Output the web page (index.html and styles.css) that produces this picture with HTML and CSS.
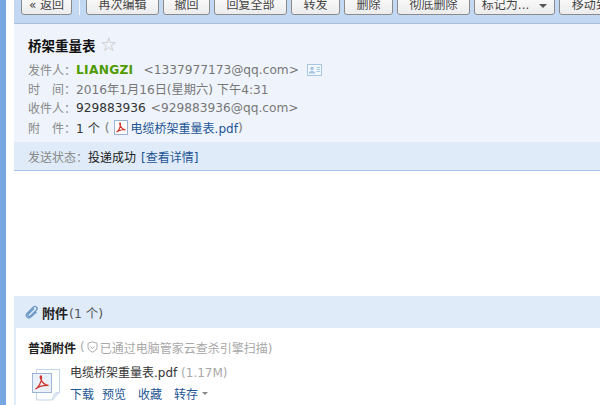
FILE: index.html
```html
<!DOCTYPE html>
<html lang="zh-CN">
<head>
    <meta charset="UTF-8">
    <title>桥架重量表</title>
    <link rel="stylesheet" href="styles.css">
</head>
<body>
    <div class="page">
        <div class="side"></div>
        <div class="main">
            <div class="toolbar">
                <a class="btn btn-back">« 返回</a>
                <span class="sep"></span>
                <a class="btn w73">再次编辑</a>
                <a class="btn w47">撤回</a>
                <a class="btn w73">回复全部</a>
                <a class="btn w49">转发</a>
                <a class="btn w49">删除</a>
                <a class="btn w73">彻底删除</a>
                <a class="btn w81">标记为... <i class="caret"></i></a>
                <a class="btn w73">移动到...</a>
            </div>

            <div class="head">
                <h2 class="subject">桥架重量表 <span class="star">☆</span></h2>
                <div class="row">
                    <span class="lbl">发件人：</span><b class="sender">LIANGZI</b>
                    <span class="addr addr-from">&lt;1337977173@qq.com&gt;</span>
                    <svg class="card" width="15" height="12" viewBox="0 0 15 12">
                        <rect x="0.5" y="0.5" width="14" height="11" fill="#f4f8fd" stroke="#a6c6e6"/>
                        <circle cx="5" cy="4.5" r="1.8" fill="#a6c6e6"/>
                        <path d="M2 9.5h6v-1.5l-2-1h-2l-2 1z" fill="#a6c6e6"/>
                        <path d="M9.5 3.5h3.5M9.5 5.5h3.5M9.5 7.5h3.5" stroke="#a6c6e6"/>
                    </svg>
                </div>
                <div class="row"><span class="lbl">时　间：</span><span class="addr">2016年1月16日(星期六) 下午4:31</span></div>
                <div class="row">
                    <span class="lbl">收件人：</span><span class="val">929883936</span>
                    <span class="addr">&lt;929883936@qq.com&gt;</span>
                </div>
                <div class="row row-att">
                    <span class="lbl">附　件：</span><span class="val">1 个</span>
                    <span class="addr">(</span>
                    <svg class="pdf" width="14" height="15" viewBox="0 0 14 15">
                        <rect x="0.5" y="0.5" width="13" height="14" fill="#fff" stroke="#9db4d6"/>
                        <path d="M2.5 12c2-1 4-4.500 4-8 0-2-1.500-1-.5 1 1 2.500 3 4.500 5.500 5-2-.5-6 0-9 2z" fill="none" stroke="#d0342c" stroke-width="1.100"/>
                    </svg>
                    <a class="link">电缆桥架重量表.pdf</a><span class="addr">)</span>
                </div>
            </div>

            <div class="status">
                <span class="lbl">发送状态：</span><span class="status-text">投递成功</span>
                <a class="link">[查看详情]</a>
            </div>

            <div class="body"></div>

            <div class="att-head">
                <svg class="clip" width="14" height="15" viewBox="0 0 14 15">
                    <path d="M9 3.500 3.500 9c-1.500 1.500 .5 3.500 2 2l6-6c1-1 .7-2.300 0-3s-2-1-3 0L2 8.500c-2 2.500 1 6 3.800 3.500L11.500 7" fill="none" stroke="#6f9bc8" stroke-width="1.400"/>
                </svg>
                <b class="att-title">附件</b><span class="att-count">(1 个)</span>
            </div>

            <div class="att-body">
                <div class="att-type">
                    <b>普通附件</b>
                    <span class="scan">(
                        <svg class="shield" width="11" height="12" viewBox="0 0 11 12">
                            <path d="M5.500 .8 10 2.300V6c0 2.500-2 4.200-4.500 5.200C3 10.200 1 8.500 1 6V2.300z" fill="none" stroke="#aaa"/>
                            <path d="M3.500 5.500l2 2 2-2" fill="none" stroke="#aaa"/>
                        </svg>
                        已通过电脑管家云查杀引擎扫描)</span>
                </div>
                <div class="att-file">
                    <svg class="bigpdf" width="29" height="32" viewBox="0 0 29 32">
                        <path d="M4.500 .5h23v23l-7 7.500h-16z" fill="#fdfefe" stroke="#c5d6ea"/>
                        <path d="M27.500 23.500c-3 0-6-.5-7 7.500" fill="#dfe8f3" stroke="#c5d6ea"/>
                        <rect x="0.500" y="4.500" width="19" height="19" fill="#eaf1f9" stroke="#9db4d6"/>
                        <path d="M3.500 20c3-1.500 6-6.500 6-11.500 0-3-2-1.500-1 1 1.500 4 4 6.500 8 7-3-.5-9.500 .5-13 3.500z" fill="none" stroke="#d0342c" stroke-width="1.300"/>
                    </svg>
                    <div class="file-info">
                        <div class="file-name">电缆桥架重量表.pdf <span class="file-size">(1.17M)</span></div>
                        <div class="file-ops">
                            <a class="link">下载</a><a class="link">预览</a><a class="link">收藏</a><a class="link">转存</a><i class="caret caret-op"></i>
                        </div>
                    </div>
                </div>
            </div>
        </div>
    </div>
</body>
</html>
```

FILE: styles.css
```css
html, body {
    margin: 0;
    height: 100%;
    overflow: hidden;
}
body {
    background-color: #fff;
    color: #000;
    font-family: "DejaVu Sans", "Noto Sans CJK SC", sans-serif;
    font-size: 12.2px;
}
a {
    text-decoration: none;
}
.page {
    display: flex;
    height: 405px;
}
.side {
    width: 6px;
    background-color: #76a7e0;
    margin-right: 8px;
}
.main {
    flex: 1;
    min-width: 0;
}
.toolbar {
    display: flex;
    align-items: flex-end;
    height: 24px;
    padding: 0 0 8px 7px;
    box-sizing: border-box;
    background-color: #c3d9f3;
    border-bottom: 1px solid #a9bfd6;
    overflow: hidden;
}
.btn {
    flex: none;
    display: block;
    height: 24px;
    line-height: 27px;
    margin-right: 4px;
    box-sizing: border-box;
    text-align: center;
    color: #444;
    background: linear-gradient(#fff, #ececec);
    border: 1px solid #8b8b8b;
    border-radius: 3px;
    font-size: 12px;
}
.btn-back {
    width: 51px;
}
.w47 { width: 47px; }
.w49 { width: 49px; }
.w73 { width: 73px; }
.w81 { width: 81px; }
.sep {
    flex: none;
    width: 1px;
    height: 15px;
    margin: 0 6px 0 3px;
    background-color: #f2f6fb;
}
.caret {
    display: inline-block;
    width: 0;
    height: 0;
    margin-left: 6px;
    vertical-align: middle;
    border: 4px solid transparent;
    border-top: 4px solid #555;
    border-bottom: 0;
}
.head {
    height: 118px;
    padding: 10px 0 0 14px;
    box-sizing: border-box;
    background-color: #eff4fc;
}
.subject {
    margin: 0 0 6px;
    height: 20px;
    line-height: 20px;
    font-size: 13.5px;
    font-weight: bold;
    color: #111;
}
.star {
    color: #bbb;
    font-weight: normal;
    font-size: 19px;
    line-height: 20px;
}
.row {
    display: flex;
    align-items: center;
    height: 19px;
    white-space: pre;
}
.row-att {
    margin-top: 1px;
}
.lbl {
    color: #888;
    font-size: 12px;
    width: 48px;
    flex: none;
}
.sender {
    color: #4f9a00;
    font-weight: bold;
    letter-spacing: .3px;
}
.addr {
    color: #777;
}
.addr-from {
    margin-left: 10px;
}
.val {
    color: #333;
}
.row .val + .addr {
    margin-left: 5px;
}
.card {
    margin-left: 8px;
}
.pdf {
    margin: 0 3px 0 4px;
}
.link {
    color: #1d5494;
    font-size: 12px;
}
.status {
    display: flex;
    align-items: center;
    height: 28px;
    padding-left: 14px;
    background-color: #dfebf8;
    border-bottom: 1px solid #a7c5e8;
    font-size: 12px;
}
.status .lbl {
    width: 60px;
}
.status-text {
    color: #222;
    margin-right: 5px;
}
.body {
    height: 125px;
}
.att-head {
    display: flex;
    align-items: center;
    height: 32px;
    padding-left: 11px;
    background-color: #dfebf8;
}
.clip {
    margin-right: 3px;
}
.att-title {
    font-size: 13px;
    color: #222;
}
.att-count {
    margin-left: 1px;
    color: #555;
    font-size: 12.5px;
}
.att-body {
    padding: 9px 0 0 12px;
    border-left: 2px solid #dfebf8;
    height: 77px;
    box-sizing: border-box;
}
.att-type {
    display: flex;
    align-items: center;
    height: 20px;
    font-size: 12px;
    color: #222;
}
.scan {
    display: inline-flex;
    align-items: center;
    margin-left: 4px;
    color: #a8a8a8;
}
.shield {
    margin: 0 2px 0 2px;
}
.att-file {
    display: flex;
    margin-top: 6px;
}
.bigpdf {
    margin: 6px 9px 0 4px;
}
.file-name {
    height: 20px;
    line-height: 20px;
    color: #333;
    font-size: 12px;
}
.file-size {
    color: #a8a8a8;
}
.file-ops {
    display: flex;
    align-items: center;
    height: 20px;
    font-size: 12px;
}
.file-ops .link {
    margin-right: 12px;
}
.file-ops .link:first-child {
    margin-right: 8px;
}
.caret-op {
    margin-left: -8px;
    border-width: 3px;
    border-top: 3px solid #888;
    border-bottom: 0;
}
```
